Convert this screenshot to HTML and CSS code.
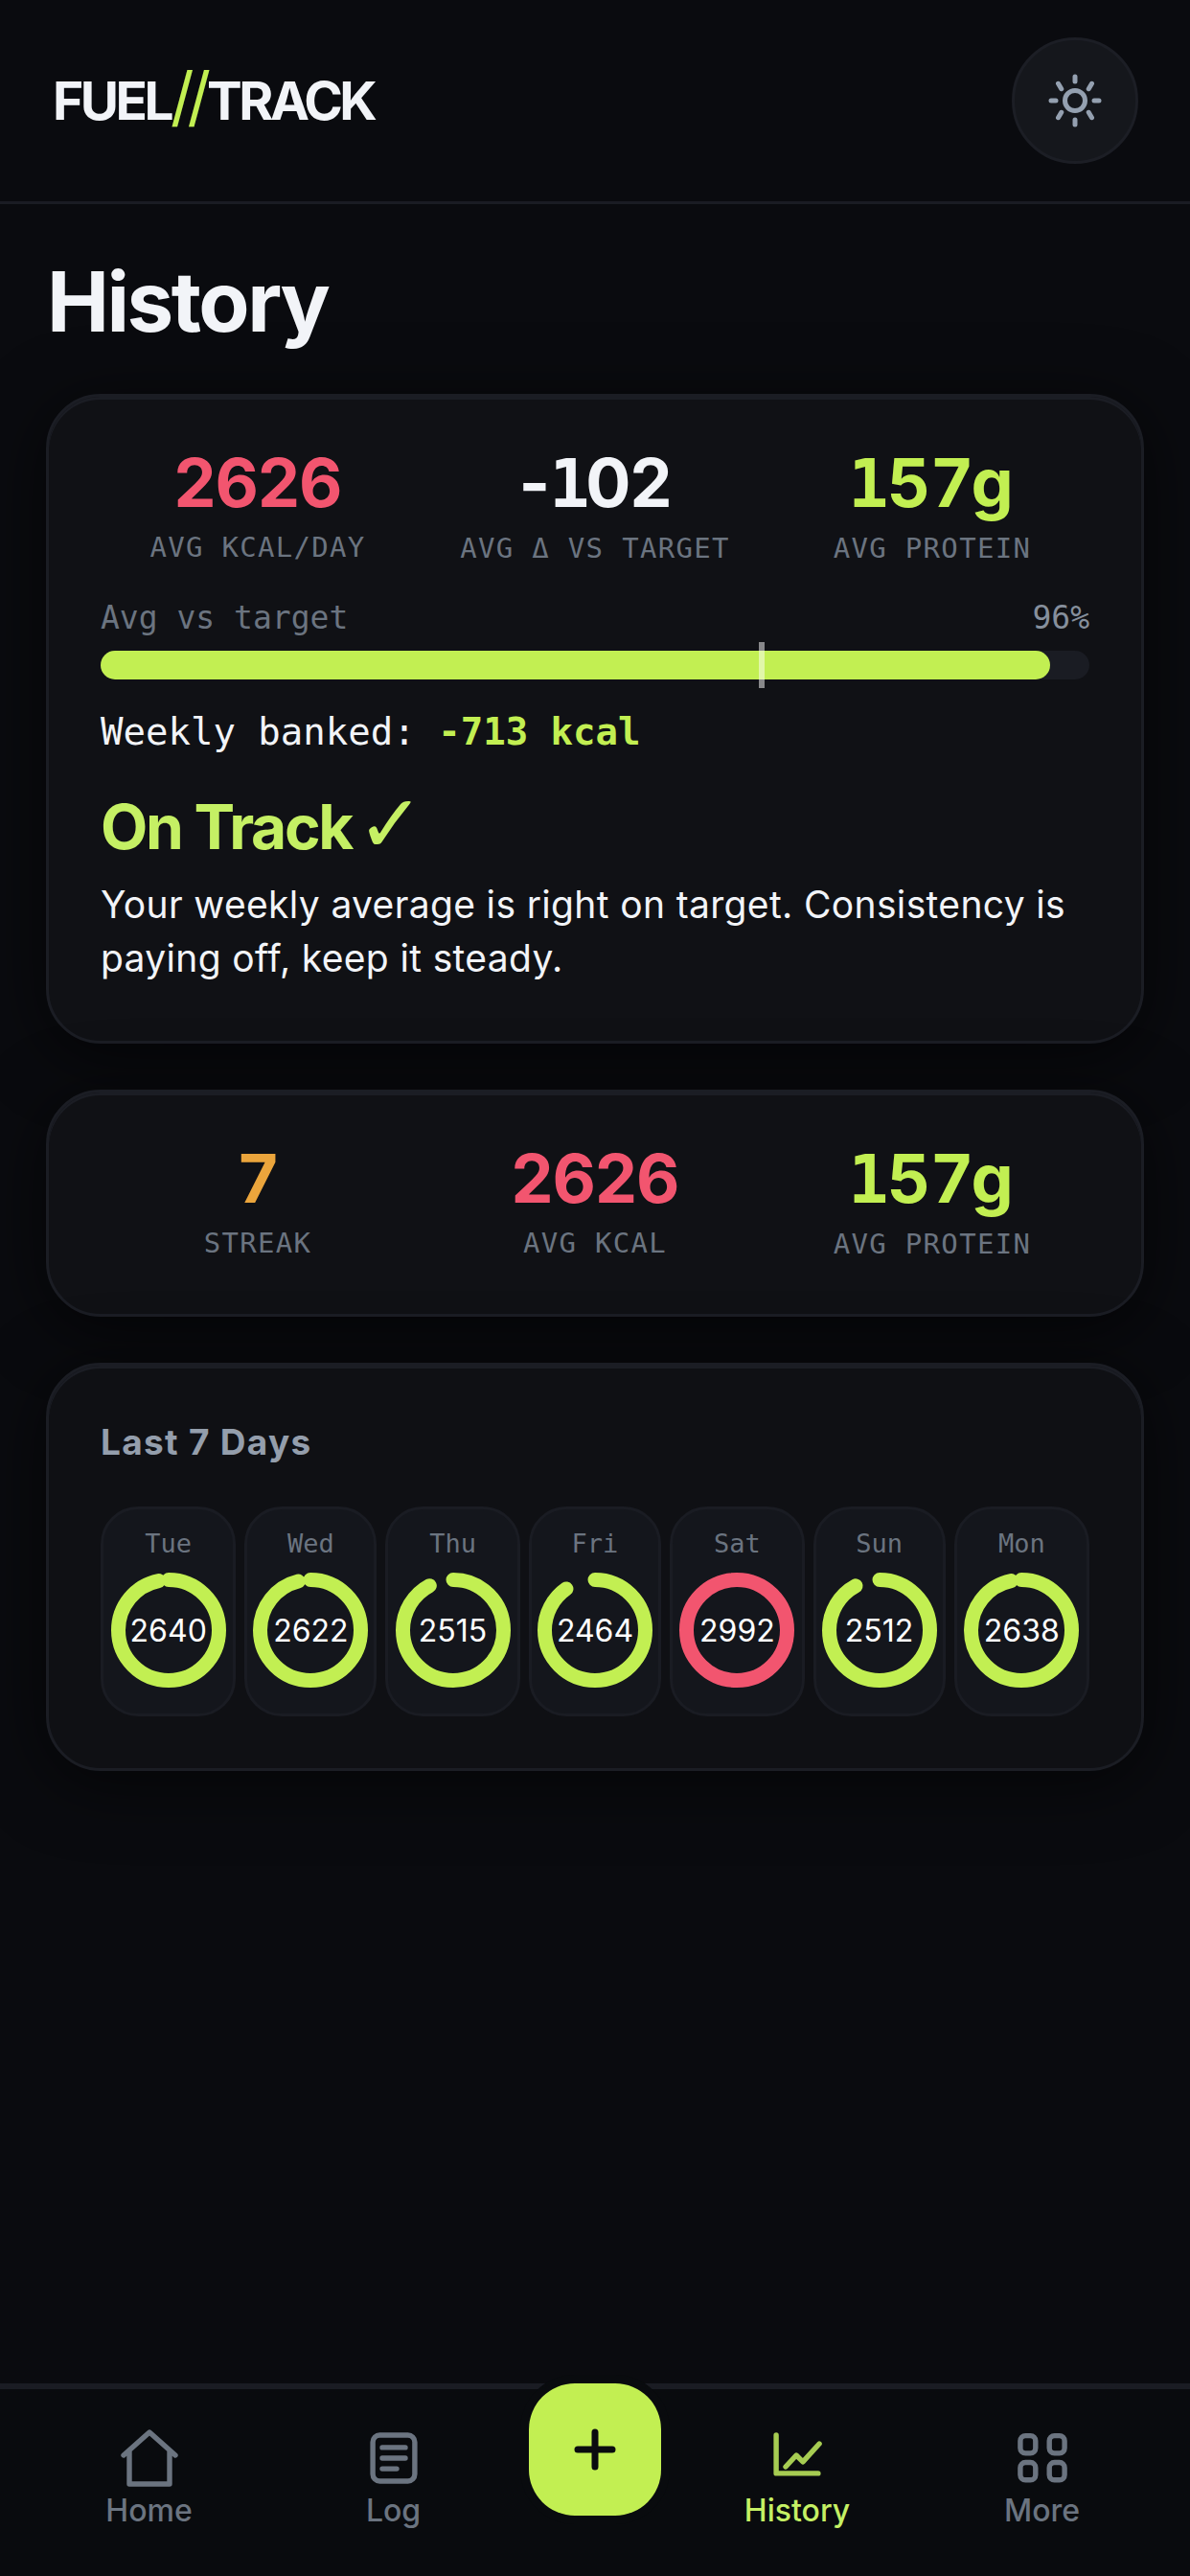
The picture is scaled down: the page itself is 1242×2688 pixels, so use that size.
FILE: index.html
```html
<!DOCTYPE html>
<html lang="en">
<head>
  <meta charset="UTF-8" />
  <meta name="viewport" content="width=device-width, initial-scale=1.0" />
  <title>FuelTrack - History</title>
  <link rel="stylesheet" href="styles.css">
</head>
<body>
  <header class="top-bar">
    <div class="logo">FUEL<span class="logo-slash">//</span>TRACK</div>
    <button class="theme-btn" aria-label="Toggle theme">
      <svg viewBox="0 0 24 24" width="60" height="60" fill="none" stroke="#94a0b0" stroke-width="2" stroke-linecap="round">
        <circle cx="12" cy="12" r="4.2" />
        <path d="M12 2v2M12 20v2M5 4.9l1.3 2.2M17.7 16.9 19 19.1M2 12h2M20 12h2M5 19.1l1.3-2.2M17.7 7.1 19 4.9" />
      </svg>
    </button>
  </header>

  <main class="content">
    <h1 class="page-title">History</h1>

    <section class="card summary-card">
      <div class="stat-row">
        <div class="stat">
          <div class="stat-value red">2626</div>
          <div class="stat-label">AVG KCAL/DAY</div>
        </div>
        <div class="stat">
          <div class="stat-value">-<span class="one">1</span>02</div>
          <div class="stat-label">AVG Δ VS TARGET</div>
        </div>
        <div class="stat">
          <div class="stat-value green"><span class="one">1</span>57g</div>
          <div class="stat-label">AVG PROTEIN</div>
        </div>
      </div>

      <div class="bar-head">
        <span>Avg vs target</span>
        <span class="bar-pct">96%</span>
      </div>
      <div class="bar-track">
        <div class="bar-fill" style="width: 96%"></div>
        <div class="bar-mark" style="left: 66.6%"></div>
      </div>

      <p class="banked">Weekly banked: <strong>-713 kcal</strong></p>
      <h2 class="verdict">On Track<span class="tick"> ✓</span></h2>
      <p class="verdict-text">Your weekly average is right on target. Consistency is paying off, keep it steady.</p>
    </section>

    <section class="card stats-card">
      <div class="stat-row">
        <div class="stat">
          <div class="stat-value orange">7</div>
          <div class="stat-label">STREAK</div>
        </div>
        <div class="stat">
          <div class="stat-value red">2626</div>
          <div class="stat-label">AVG KCAL</div>
        </div>
        <div class="stat">
          <div class="stat-value green"><span class="one">1</span>57g</div>
          <div class="stat-label">AVG PROTEIN</div>
        </div>
      </div>
    </section>

    <section class="card days-card">
      <h3 class="days-title">Last 7 Days</h3>
      <div class="days">
        <div class="day">
          <span class="day-name">Tue</span>
          <div class="ring">
            <svg viewBox="0 0 120 120" width="120" height="120"><circle cx="60" cy="60" r="52.5" pathLength="100" stroke-dasharray="96.8 100" /></svg>
            <span class="ring-num">2640</span>
          </div>
        </div>
        <div class="day">
          <span class="day-name">Wed</span>
          <div class="ring">
            <svg viewBox="0 0 120 120" width="120" height="120"><circle cx="60" cy="60" r="52.5" pathLength="100" stroke-dasharray="96.1 100" /></svg>
            <span class="ring-num">2622</span>
          </div>
        </div>
        <div class="day">
          <span class="day-name">Thu</span>
          <div class="ring">
            <svg viewBox="0 0 120 120" width="120" height="120"><circle cx="60" cy="60" r="52.5" pathLength="100" stroke-dasharray="92.2 100" /></svg>
            <span class="ring-num">2515</span>
          </div>
        </div>
        <div class="day">
          <span class="day-name">Fri</span>
          <div class="ring">
            <svg viewBox="0 0 120 120" width="120" height="120"><circle cx="60" cy="60" r="52.5" pathLength="100" stroke-dasharray="90.3 100" /></svg>
            <span class="ring-num">2464</span>
          </div>
        </div>
        <div class="day">
          <span class="day-name">Sat</span>
          <div class="ring over">
            <svg viewBox="0 0 120 120" width="120" height="120"><circle cx="60" cy="60" r="52.5" pathLength="100" stroke-dasharray="100 100" /></svg>
            <span class="ring-num">2992</span>
          </div>
        </div>
        <div class="day">
          <span class="day-name">Sun</span>
          <div class="ring">
            <svg viewBox="0 0 120 120" width="120" height="120"><circle cx="60" cy="60" r="52.5" pathLength="100" stroke-dasharray="92.1 100" /></svg>
            <span class="ring-num">2512</span>
          </div>
        </div>
        <div class="day">
          <span class="day-name">Mon</span>
          <div class="ring">
            <svg viewBox="0 0 120 120" width="120" height="120"><circle cx="60" cy="60" r="52.5" pathLength="100" stroke-dasharray="96.7 100" /></svg>
            <span class="ring-num">2638</span>
          </div>
        </div>
      </div>
    </section>
  </main>

  <nav class="bottom-nav">
    <a class="nav-item">
      <svg viewBox="0 0 24 24" width="72" height="72"><path d="M3 11 12 3l9 8M5 9.5V21h14V9.5" /></svg>
      <span>Home</span>
    </a>
    <a class="nav-item">
      <svg viewBox="0 0 24 24" width="72" height="72"><rect x="4.7" y="4" width="14.6" height="16" rx="2.4" /><path d="M8 8.3h8M8 12h8M8 15.7h5" /></svg>
      <span>Log</span>
    </a>
    <button class="fab" aria-label="Add entry">
      <svg viewBox="0 0 44 44" width="44" height="44"><path d="M4 22h36M22 4v36" /></svg>
    </button>
    <a class="nav-item active">
      <svg viewBox="0 0 24 24" width="72" height="72"><path d="M4.7 4v13.3h14.6M8 15l3.7-4 2.3 2.3L19.7 7" /></svg>
      <span>History</span>
    </a>
    <a class="nav-item">
      <svg viewBox="0 0 24 24" width="72" height="72"><rect x="4.3" y="4.2" width="5.3" height="6.1" rx="1.8" /><rect x="14.4" y="4.2" width="5.3" height="6.1" rx="1.8" /><rect x="4.3" y="13.5" width="5.3" height="6.1" rx="1.8" /><rect x="14.4" y="13.5" width="5.3" height="6.1" rx="1.8" /></svg>
      <span>More</span>
    </a>
  </nav>
</body>
</html>
```

FILE: styles.css
```css
* { box-sizing: border-box; }
html, body { margin: 0; padding: 0; }
body { width: 1242px; height: 2688px; display: flex; flex-direction: column; background: #0a0b0f; color: #f2f4f8; font-family: Inter, "DejaVu Sans", sans-serif; overflow: hidden; }

.top-bar { height: 213px; flex: none; display: flex; align-items: center; justify-content: space-between; padding: 0 54px 0 55px; background: #0a0b0f; border-bottom: 3px solid #1a1c23; }
.logo { font-size: 55px; font-weight: 700; letter-spacing: -3.5px; line-height: 64px; }
.logo-slash { color: #c2ef52; font-size: 68px; font-weight: 400; line-height: 0; letter-spacing: -7px; margin-right: 3px; }
.theme-btn { width: 132px; height: 132px; padding: 0; display: flex; align-items: center; justify-content: center; border-radius: 50%; background: #15171c; border: 3px solid #1c1e25; }

.content { flex: 1; padding: 0 48px; }
.page-title { margin: 0; padding: 30px 0 0 1px; font-size: 87px; line-height: 144px; font-weight: 700; letter-spacing: -2.5px; height: 198px; }

.card { background: #101115; border: 3px solid #1b1d24; border-radius: 57px; box-shadow: inset 0 3px 0 #1b1d24, 0 12px 72px rgba(0, 0, 0, 0.6); padding: 51px 54px 0; margin-bottom: 48px; }
.summary-card { height: 678px; }
.stats-card { height: 237px; }
.days-card { height: 426px; background: #0f1014; }

.stat-row { display: grid; grid-template-columns: repeat(3, 1fr); gap: 24px; }
.stat { text-align: center; }
.stat-value { font-size: 70px; font-weight: 700; line-height: 78px; letter-spacing: -1px; }
.stat-value.green { letter-spacing: 3px; }
.stat-label { margin-top: 9px; font-family: "DejaVu Sans Mono", monospace; font-size: 29px; line-height: 38px; letter-spacing: 1.3px; color: #6b7480; }
.one { font-family: "DejaVu Sans Mono", monospace; letter-spacing: -4px; }
.stat-value.green .one { letter-spacing: -2px; }
.red { color: #f2556f; }
.green { color: #c2ef52; }
.orange { color: #eba53c; }

.bar-head { margin-top: 33px; display: flex; justify-content: space-between; font-family: "DejaVu Sans Mono", monospace; font-size: 33px; line-height: 42px; color: #6b7480; }
.bar-pct { color: #868f9c; }
.bar-track { position: relative; margin-top: 13px; height: 30px; border-radius: 15px; background: #1a1c23; }
.bar-fill { height: 100%; border-radius: 15px; background: #c2ef52; }
.bar-mark { position: absolute; top: -9px; bottom: -9px; width: 6px; background: rgba(255, 255, 255, 0.5); }

.banked { margin: 30px 0 0; font-family: "DejaVu Sans Mono", monospace; font-size: 39px; line-height: 50px; color: #f2f4f8; }
.banked strong { color: #c2ef52; }
.verdict { margin: 36px 0 0; font-size: 64px; line-height: 76px; font-weight: 700; letter-spacing: -2.3px; color: #c5f064; }
.tick { font-family: "DejaVu Sans", sans-serif; font-size: 84px; font-weight: 400; line-height: 0; word-spacing: -19px; vertical-align: -3px; }
.verdict-text { margin: 15px 0 0; font-size: 39px; line-height: 56px; letter-spacing: 0.35px; color: #f2f4f8; }

.days-title { margin: 0; padding-top: 5px; font-size: 37px; line-height: 48px; font-weight: 700; letter-spacing: 1.3px; color: #949eac; }
.days { margin-top: 43px; display: grid; grid-template-columns: 141fr 137.5fr 140fr 138fr 140fr 137.5fr 141fr; gap: 9px; }
.day { height: 219px; display: flex; flex-direction: column; align-items: center; padding-top: 18px; background: #14161c; border: 3px solid #1a1c23; border-radius: 39px; }
.day-name { font-family: "DejaVu Sans Mono", monospace; font-size: 27px; line-height: 36px; color: #6b7480; }
.ring { position: relative; width: 120px; height: 120px; margin-top: 12px; }
.ring svg { display: block; transform: rotate(-90deg); }
.ring circle { fill: none; stroke: #c2ef52; stroke-width: 15; stroke-linecap: round; }
.ring.over circle { stroke: #f2556f; }
.ring-num { position: absolute; inset: 0; display: flex; align-items: center; justify-content: center; font-size: 32px; color: #fff; }

.bottom-nav { height: 201px; flex: none; display: grid; grid-template-columns: 255px 255px 165px 258px 253px; padding-left: 28px; background: #090b0e; border-top: 6px solid #1a1c23; }
.nav-item { display: flex; flex-direction: column; align-items: center; padding-top: 36px; font-size: 32px; font-weight: 500; line-height: 40px; color: #6b7480; }
.nav-item svg { display: block; fill: none; stroke: #6b7480; stroke-width: 1.8; stroke-linecap: round; stroke-linejoin: round; margin-bottom: -1px; }
.nav-item.active { color: #c5f064; }
.nav-item.active svg { stroke: #a6cc52; }
.fab { justify-self: center; width: 138px; height: 138px; margin-top: -6px; padding: 0; display: flex; align-items: center; justify-content: center; border: none; border-radius: 48px; background: #c2ef52; box-shadow: 0 0 0 9px #090b0e; }
.fab svg { display: block; fill: none; stroke: #0a0b0f; stroke-width: 7; stroke-linecap: round; }
```
